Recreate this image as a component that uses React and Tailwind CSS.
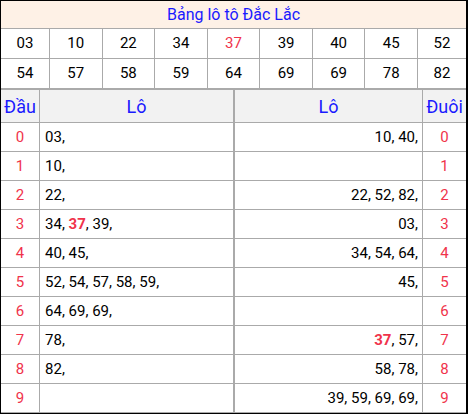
const topNumbers = [
  ['03', '10', '22', '34', '37', '39', '40', '45', '52'],
  ['54', '57', '58', '59', '64', '69', '69', '78', '82'],
]

const rows = [
  { d: '0', left: ['03'], right: ['10', '40'] },
  { d: '1', left: ['10'], right: [] },
  { d: '2', left: ['22'], right: ['22', '52', '82'] },
  { d: '3', left: ['34', '37', '39'], right: ['03'] },
  { d: '4', left: ['40', '45'], right: ['34', '54', '64'] },
  { d: '5', left: ['52', '54', '57', '58', '59'], right: ['45'] },
  { d: '6', left: ['64', '69', '69'], right: [] },
  { d: '7', left: ['78'], right: ['37', '57'] },
  { d: '8', left: ['82'], right: ['58', '78'] },
  { d: '9', left: [], right: ['39', '59', '69', '69'] },
]

// 37 is the special number, shown bold red
function NumList({ items }) {
  return (
    <span>
      {items.map((n, i) => (
        <span key={i}>
          {n === '37' ? <b className="text-[#f0334b] font-bold">{n}</b> : n}
          {i < items.length - 1 ? ', ' : ','}
        </span>
      ))}
    </span>
  )
}

export default function App() {
  return (
    <div className="w-[468px] h-[414px] bg-white border-t border-l border-b border-r-2 border-black font-['Roboto',sans-serif] text-[15px] text-black overflow-hidden">
      {/* Title */}
      <div className="h-[28px] bg-[#fef1e6] border-b border-[#aaaaaa] flex items-center justify-center text-[16px] text-[#1a1aff]">
        Bảng lô tô Đắc Lắc
      </div>

      {/* Drawn numbers */}
      {topNumbers.map((row, r) => (
        <div
          key={r}
          className={`grid grid-cols-[49px_repeat(7,minmax(0,1fr))_48px] border-[#aaaaaa] ${r === 0 ? 'h-[30px] border-b' : 'h-[31px] border-b-2'}`}
        >
          {row.map((n, i) => (
            <div
              key={i}
              className={`flex items-center justify-center border-[#aaaaaa] ${i < 8 ? 'border-r' : ''} ${n === '37' && r === 0 ? 'text-[#f0334b]' : ''}`}
            >
              {n}
            </div>
          ))}
        </div>
      ))}

      {/* Header */}
      <div className="h-[33px] flex bg-[#f2f2f2] border-b border-[#aaaaaa] text-[18px] text-[#1a1aff]">
        <div className="w-[39px] border-r border-[#aaaaaa] flex items-center justify-center">Đầu</div>
        <div className="w-[195px] border-r-2 border-[#aaaaaa] flex items-center justify-center">Lô</div>
        <div className="w-[188px] border-r border-[#aaaaaa] flex items-center justify-center">Lô</div>
        <div className="flex-1 flex items-center justify-center">Đuôi</div>
      </div>

      {/* Rows */}
      {rows.map((row) => (
        <div key={row.d} className="h-[29px] flex border-b border-[#aaaaaa]">
          <div className="w-[39px] border-r border-[#aaaaaa] flex items-center justify-center text-[#f0334b]">{row.d}</div>
          <div className="w-[195px] border-r-2 border-[#aaaaaa] flex items-center pl-[5px] whitespace-nowrap">
            <NumList items={row.left} />
          </div>
          <div className="w-[188px] border-r border-[#aaaaaa] flex items-center justify-end pr-[4px] whitespace-nowrap">
            <NumList items={row.right} />
          </div>
          <div className="flex-1 flex items-center justify-center text-[#f0334b]">{row.d}</div>
        </div>
      ))}
    </div>
  )
}
